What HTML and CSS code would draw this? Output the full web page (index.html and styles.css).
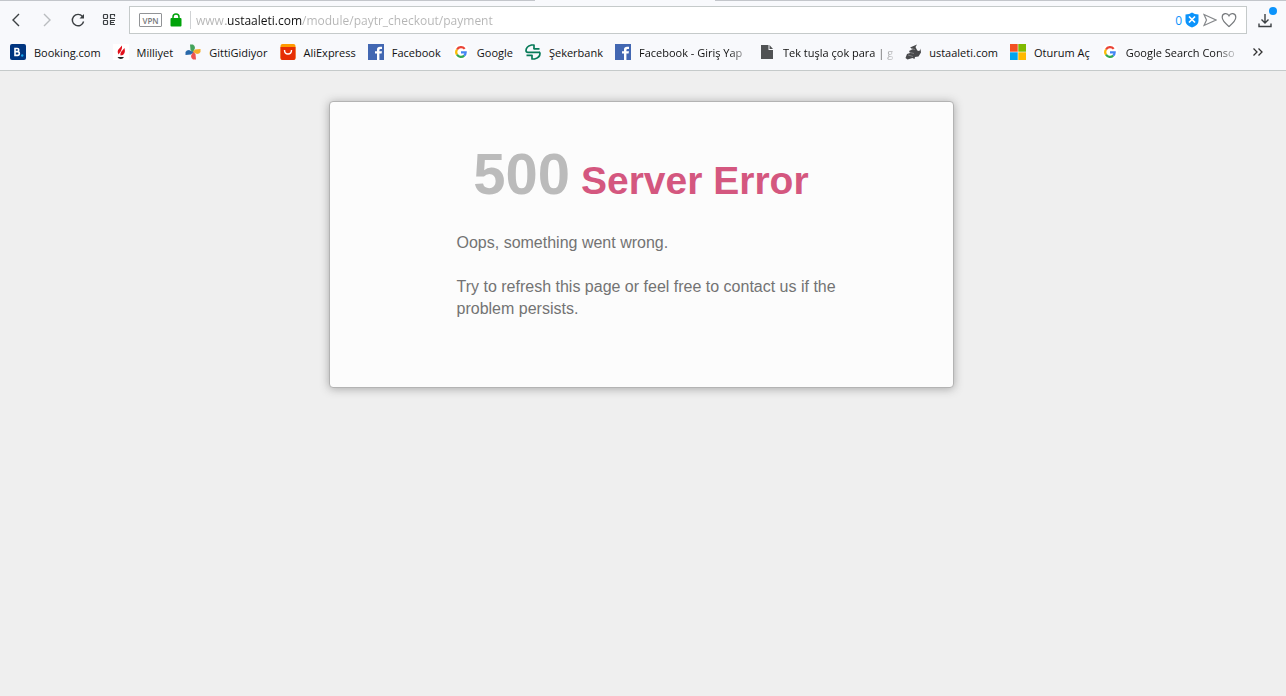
FILE: index.html
```html
<!DOCTYPE html>
<html lang="en">
<head>
  <meta charset="UTF-8" />
  <meta name="viewport" content="width=device-width, initial-scale=1.0"/>
  <title>500 Server Error</title>
  <link rel="stylesheet" href="styles.css">
</head>

<body>
  <header class="browser">
    <div class="tab-edge"><span class="tab-active"></span></div>

    <div class="toolbar">
      <button class="nav-btn" aria-label="Back">
        <svg width="16" height="16" viewBox="0 0 16 16"><path d="M11 2L5 8l6 6" fill="none" stroke="#3c4043" stroke-width="1.4"/></svg>
      </button>
      <button class="nav-btn" aria-label="Forward" disabled>
        <svg width="16" height="16" viewBox="0 0 16 16"><path d="M5 2l6 6-6 6" fill="none" stroke="#b9bcbf" stroke-width="1.4"/></svg>
      </button>
      <button class="nav-btn" aria-label="Reload">
        <svg width="16" height="16" viewBox="0 0 16 16"><path d="M12.500 4.500A5.700 5.700 0 1 0 13.600 9.500" fill="none" stroke="#3c4043" stroke-width="1.400"/><path d="M14 2v4.500H9.500z" fill="#3c4043"/></svg>
      </button>
      <button class="nav-btn" aria-label="Speed dial">
        <svg width="16" height="16" viewBox="0 0 16 16" fill="none" stroke="#3c4043" stroke-width="1.200"><rect x="2.500" y="2.500" width="4" height="4" rx=".7"/><rect x="2.500" y="8.500" width="4" height="4" rx=".7"/><path d="M14 2.500H9.500v4H14M13.500 2.500v2M14 8.500H9.500v4H14M9.500 10.500H13"/></svg>
      </button>

      <form class="address">
        <button type="button" class="vpn">VPN</button>
        <svg class="lock" width="12" height="16" viewBox="0 0 12 16"><path d="M3 8V5a3 3 0 0 1 6 0v3" fill="none" stroke="#00a30a" stroke-width="1.500"/><rect x="0.500" y="6" width="11" height="8.500" rx="1" fill="#00a30a"/></svg>
        <span class="divider"></span>
        <input class="url" type="text" aria-label="Address" value="www.ustaaleti.com/module/paytr_checkout/payment" />
        <span class="blocked">0</span>
        <button type="button" class="icon-btn" aria-label="Ad blocker">
          <svg width="14" height="16" viewBox="0 0 14 16"><path d="M0.500 2.500Q4.500 2.500 7 .5q2.500 2 6.500 2V9q0 4-6.500 6.500Q.5 13 .5 9z" fill="#0b93fb"/><path d="M4 4.500l6 6M10 4.500l-6 6" stroke="#fff" stroke-width="1.700"/></svg>
        </button>
        <button type="button" class="icon-btn" aria-label="Send">
          <svg width="14" height="14" viewBox="0 0 14 14"><path d="M1 1.500L13 7 1 12.500 3.500 7z" fill="none" stroke="#85888b" stroke-width="1.200"/></svg>
        </button>
        <button type="button" class="icon-btn" aria-label="Add to bookmarks">
          <svg width="16" height="16" viewBox="0 0 16 16"><path d="M8 14.500C5 12 1.200 9 1.200 5.300 1.200 1 6.500.5 8 3.800 9.500.5 14.800 1 14.800 5.300 14.800 9 11 12 8 14.500z" fill="none" stroke="#777a7d" stroke-width="1.200"/></svg>
        </button>
      </form>

      <button class="download" aria-label="Downloads">
        <svg width="14" height="16" viewBox="0 0 14 16"><path d="M7 2v9M3.500 7.500L7 11l3.500-3.500M1 11.500v3h12v-3" fill="none" stroke="#3c4043" stroke-width="1.400"/></svg>
        <span class="dot"></span>
      </button>
    </div>

    <nav class="bookmarks">
      <a href="#"><svg viewBox="0 0 16 16"><rect width="16" height="16" rx="2" fill="#003580"/><path d="M5 4.500h2.200q1.600 0 1.600 1.500T7.200 7.600H5zM5 7.600h2.600q1.700 0 1.700 1.900t-1.700 1.900H5z" fill="none" stroke="#fff" stroke-width="1.600"/><circle cx="12.200" cy="11.500" r="1.200" fill="#18a5ec"/></svg><span>Booking.com</span></a>
      <a href="#"><svg viewBox="0 0 16 16"><rect width="16" height="16" fill="#fff"/><path d="M9 1.500L5 6q-1 2 .5 4.500L8 7q1.500-2.500 1-5.500zM11.500 4L8 8q-1 1.500-.5 3.500 3 0 4-2.500.8-2 0-5z" fill="#e2111c"/><path d="M4.500 13h6.500q-1 2-3.200 2t-3.300-2z" fill="#222"/></svg><span>Milliyet</span></a>
      <a href="#"><svg viewBox="0 0 16 16"><path d="M5 .5h3q2 1 2 3.500L8 8.500 5.500 6z" fill="#44a35b"/><path d="M15.500 5v3q-1 2-3.500 2L7.500 8 10 5.500z" fill="#f4ad29"/><path d="M11 15.500H8Q6 14.500 6 12l2-4.500L10.500 10z" fill="#ed5350"/><path d="M.5 11V8q1-2 3.500-2l4.500 2L6 10.500z" fill="#2868a9"/></svg><span>GittiGidiyor</span></a>
      <a href="#"><svg viewBox="0 0 16 16"><rect x=".5" width="15" height="16" rx="2" fill="#ff9a00"/><path d="M.5 3h15v11q0 2-2 2h-11q-2 0-2-2z" fill="#e62e04"/><path d="M4.500 6q0 4 3.500 4t3.500-4" fill="none" stroke="#fff" stroke-width="1.400"/></svg><span>AliExpress</span></a>
      <a href="#"><svg viewBox="0 0 16 16"><rect width="16" height="16" fill="#4267b2"/><path d="M9 16V9.500H7V7.200h2V5.500Q9 2.800 12 2.800h2v2.300h-1.400q-1.200 0-1.200 1.100v1H14l-.4 2.300h-2.200V16z" fill="#fff"/></svg><span>Facebook</span></a>
      <a href="#"><svg viewBox="0 0 16 16"><rect width="16" height="16" rx="8" fill="#fff"/><g fill="none" stroke-width="2.200"><path d="M11.700 4.900A4.700 4.700 0 0 0 4 5.500" stroke="#ea4335"/><path d="M4 5.500a4.700 4.700 0 0 0 0 5.200" stroke="#fbbc05"/><path d="M4 10.700a4.700 4.700 0 0 0 7.200.9" stroke="#34a853"/><path d="M11.200 11.600Q12.700 10.400 12.700 8.300H8" stroke="#4285f4"/></g></svg><span>Google</span></a>
      <a href="#"><svg viewBox="0 0 16 16"><g fill="none" stroke="#087b59" stroke-width="1.700" stroke-linejoin="round"><path d="M9 5V1H6.500Q1 2.500 1 6.500q0 1.800 2 1.800h11.500"/><path d="M8.500 4.800h6M7 11v4h2.500Q15 13.500 15 9.500q0-1.200-1-1.300M7.500 11.300h-6"/></g></svg><span>Şekerbank</span></a>
      <a href="#"><svg viewBox="0 0 16 16"><rect width="16" height="16" fill="#4267b2"/><path d="M9 16V9.500H7V7.200h2V5.500Q9 2.800 12 2.800h2v2.300h-1.400q-1.200 0-1.200 1.100v1H14l-.4 2.300h-2.200V16z" fill="#fff"/></svg><span class="fade">Facebook - Giriş Yap</span></a>
      <a href="#"><svg viewBox="0 0 16 16"><path d="M2 1h7.500v5H14v9H2zM10.500 1L14 5h-3.500z" fill="#505254"/></svg><span class="fade">Tek tuşla çok para | g</span></a>
      <a href="#"><svg viewBox="0 0 16 16"><path d="M5 3.500L12 .5 10.500 3l1.500 3 1 1 2-.5.500-2 .5 4-2.500 4-3.500.5-.5 2-2-1-5 1.500L.5 14 2 10l3-1L4 7l4-2z" fill="#48494b"/><path d="M3 11l5 1.500M5 8.500l4 1M6 4.500l4 1" stroke="#8b8c8e" stroke-width=".8"/></svg><span>ustaaleti.com</span></a>
      <a href="#"><svg viewBox="0 0 16 16"><path d="M0 0h7.700v7.700H0z" fill="#f25022"/><path d="M8.300 0H16v7.700H8.300z" fill="#7fba00"/><path d="M0 8.300h7.700V16H0z" fill="#00a4ef"/><path d="M8.300 8.300H16V16H8.300z" fill="#ffb900"/></svg><span>Oturum Aç</span></a>
      <a href="#"><svg viewBox="0 0 16 16"><rect width="16" height="16" rx="8" fill="#fff"/><g fill="none" stroke-width="2.200"><path d="M11.700 4.900A4.700 4.700 0 0 0 4 5.500" stroke="#ea4335"/><path d="M4 5.500a4.700 4.700 0 0 0 0 5.200" stroke="#fbbc05"/><path d="M4 10.700a4.700 4.700 0 0 0 7.200.9" stroke="#34a853"/><path d="M11.200 11.600Q12.700 10.400 12.700 8.300H8" stroke="#4285f4"/></g></svg><span class="fade">Google Search Conso</span></a>
      <button class="more" aria-label="More bookmarks">
        <svg width="12" height="10" viewBox="0 0 12 10"><path d="M1.500 1.500L5 5 1.500 8.500M6.500 1.500L10 5 6.500 8.500" fill="none" stroke="#333" stroke-width="1.300"/></svg>
      </button>
    </nav>
  </header>

  <main>
    <div class="error-card">
      <h1><span class="code">500</span> Server Error</h1>
      <div class="message">
        <p>Oops, something went wrong.</p>
        <p>Try to refresh this page or feel free to contact us if the problem persists.</p>
      </div>
    </div>
  </main>
</body>
</html>
```
FILE: styles.css
```css
:root {
  --background: #efefef;
  --chrome: #f8f9fc;
  --line: #c5caca;
  --ui-font: "Open Sans", "Noto Sans", sans-serif;
}

* {
  box-sizing: border-box;
}

body {
  margin: 0;
  background-color: var(--background);
  font-family: "Liberation Sans", Arial, sans-serif;
}

/* browser bar */
.browser {
  background: var(--chrome);
  border-bottom: 1px solid var(--line);
  font-family: var(--ui-font);
  font-size: 12px;
}

.tab-edge {
  display: flex;
  justify-content: center;
  height: 1px;
  background: #c3c6cb;
}

.tab-active {
  width: 14%;
  margin-right: 36px;
  background: var(--chrome);
}

button {
  display: flex;
  align-items: center;
  justify-content: center;
  padding: 0;
  border: none;
  background: none;
  font-family: inherit;
}

.toolbar {
  display: flex;
  align-items: center;
  padding: 5px 0 0;
}

.nav-btn {
  width: 31px;
  height: 28px;
}

.address {
  flex: 1;
  display: flex;
  align-items: center;
  height: 28px;
  margin-left: 5px;
  padding: 0 9px;
  background: white;
  border: 1px solid var(--line);
}

.vpn {
  width: 23px;
  height: 14px;
  border: 1px solid #919396;
  border-radius: 1px;
  color: #77797c;
  font-size: 8px;
  font-weight: 600;
}

.lock {
  margin: 0 8px;
}

.divider {
  width: 1px;
  height: 18px;
  background: #d0d2d4;
}

/* the host name is darker than the rest of the address */
.url {
  flex: 1;
  min-width: 0;
  margin-left: 5px;
  padding: 0;
  border: none;
  outline: none;
  font-family: inherit;
  font-size: 12px;
  color: transparent;
  background: linear-gradient(to right, #b4b4b4 30px, #111 30px, #111 106px, #b4b4b4 106px);
  -webkit-background-clip: text;
  background-clip: text;
}

.blocked {
  color: #0b93fb;
  margin-right: 3px;
}

.icon-btn {
  margin-right: 4px;
}

.icon-btn:last-child {
  margin-right: 0;
}

.download {
  position: relative;
  width: 39px;
  height: 28px;
  padding-right: 3px;
}

.dot {
  position: absolute;
  top: 1px;
  right: 9px;
  width: 8px;
  height: 8px;
  border-radius: 50%;
  background: #0b93fb;
}

.bookmarks {
  display: flex;
  align-items: center;
  gap: 12px;
  height: 36px;
  padding: 0 22px 0 10px;
  font-size: 11px;
}

.bookmarks a {
  display: flex;
  align-items: center;
  gap: 8px;
  color: #111;
  text-decoration: none;
  white-space: nowrap;
}

.bookmarks a svg {
  flex: none;
  width: 16px;
  height: 16px;
}

/* long titles fade out at the end */
.bookmarks .fade {
  min-width: 108px;
  -webkit-mask-image: linear-gradient(to right, black 90px, transparent 114px);
  mask-image: linear-gradient(to right, black 90px, transparent 114px);
}

.more {
  margin-left: auto;
  height: 16px;
}

/* error page */
main {
  display: flex;
  justify-content: center;
  padding: 30px 24px 30px 20px;
}

.error-card {
  width: 100%;
  max-width: 625px;
  padding: 36px 20px 67px;
  background: #fcfcfc;
  border: 1px solid #b3b3b3;
  border-radius: 4px;
  box-shadow: 0 1px 10px #a7a7a7;
}

h1 {
  margin: 0 0 15px;
  text-align: center;
  color: #d4577f;
  font-size: 39px;
  line-height: 72px;
}

.code {
  color: #bbb;
  font-size: 58px;
}

.message {
  margin: 0 80px 0 107px;
  color: #737373;
  font-size: 16px;
  line-height: 22px;
}

.message p {
  margin: 0 0 22px;
}

.message p:last-child {
  margin-bottom: 0;
}
```
